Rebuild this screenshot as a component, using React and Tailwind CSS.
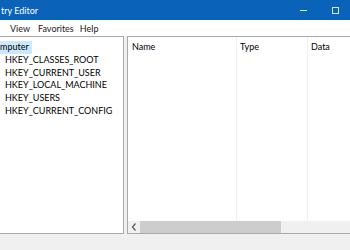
import React from "react";

export default function App() {
  const keys = [
    "HKEY_CLASSES_ROOT",
    "HKEY_CURRENT_USER",
    "HKEY_LOCAL_MACHINE",
    "HKEY_USERS",
    "HKEY_CURRENT_CONFIG",
  ];
  return (
    <div
      className="w-[350px] h-[250px] flex flex-col bg-[#f0f0f0] overflow-hidden text-black"
      style={{ fontFamily: 'Lato, "Noto Sans", sans-serif' }}
    >
      {/* Title bar */}
      <div className="h-[20px] shrink-0 bg-[#0a63b8] flex items-center text-white text-[9px] leading-none">
        <span className="pl-[1px]">try Editor</span>
        <div className="ml-auto flex items-center">
          <div className="w-[7px] h-[1px] bg-[#d8e6f5] mr-[25px]" />
          <div className="w-[7px] h-[7px] border border-[#d8e6f5] mr-[11px]" />
        </div>
      </div>
      {/* Menu bar */}
      <div className="h-[16px] shrink-0 bg-white flex items-center text-[9px] leading-none text-[#1a1a1a]">
        <span className="ml-[10px]">View</span>
        <span className="ml-[8px]">Favorites</span>
        <span className="ml-[6px]">Help</span>
      </div>
      {/* Panes */}
      <div className="flex-1 flex min-h-0">
        <div className="w-[124px] shrink-0 bg-white border-t border-r border-b border-[#a9a9a9] pt-[4px] text-[9px] leading-[12.8px] whitespace-nowrap overflow-hidden">
          <div className="w-[32px] bg-[#cce8ff]">mputer</div>
          {keys.map((k) => (
            <div key={k} className="pl-[5px]">
              {k}
            </div>
          ))}
        </div>
        <div className="w-[3px] shrink-0" />
        <div className="flex-1 bg-white border-t border-l border-b border-[#a9a9a9] flex flex-col min-w-0">
          <div className="flex-1 flex text-[9px] leading-none">
            <div className="w-[109px] shrink-0 border-r border-[#f0f0f0] pl-[4px] pt-[5px]">Name</div>
            <div className="w-[71px] shrink-0 border-r border-[#f0f0f0] pl-[3px] pt-[5px]">Type</div>
            <div className="flex-1 pl-[3px] pt-[5px]">Data</div>
          </div>
          <div className="h-[12px] shrink-0 flex bg-[#f0f0f0]">
            <div className="w-[12px] flex items-center justify-center text-[#606060]">
              <svg width="6" height="8" viewBox="0 0 6 8">
                <path d="M4.5 0.5 L1.5 4 L4.5 7.5" fill="none" stroke="#606060" strokeWidth="1.3" />
              </svg>
            </div>
            <div className="w-[141px] bg-[#cdcdcd]" />
          </div>
        </div>
      </div>
      {/* Status bar */}
      <div className="h-[16px] shrink-0 bg-[#f0f0f0]" />
    </div>
  );
}
